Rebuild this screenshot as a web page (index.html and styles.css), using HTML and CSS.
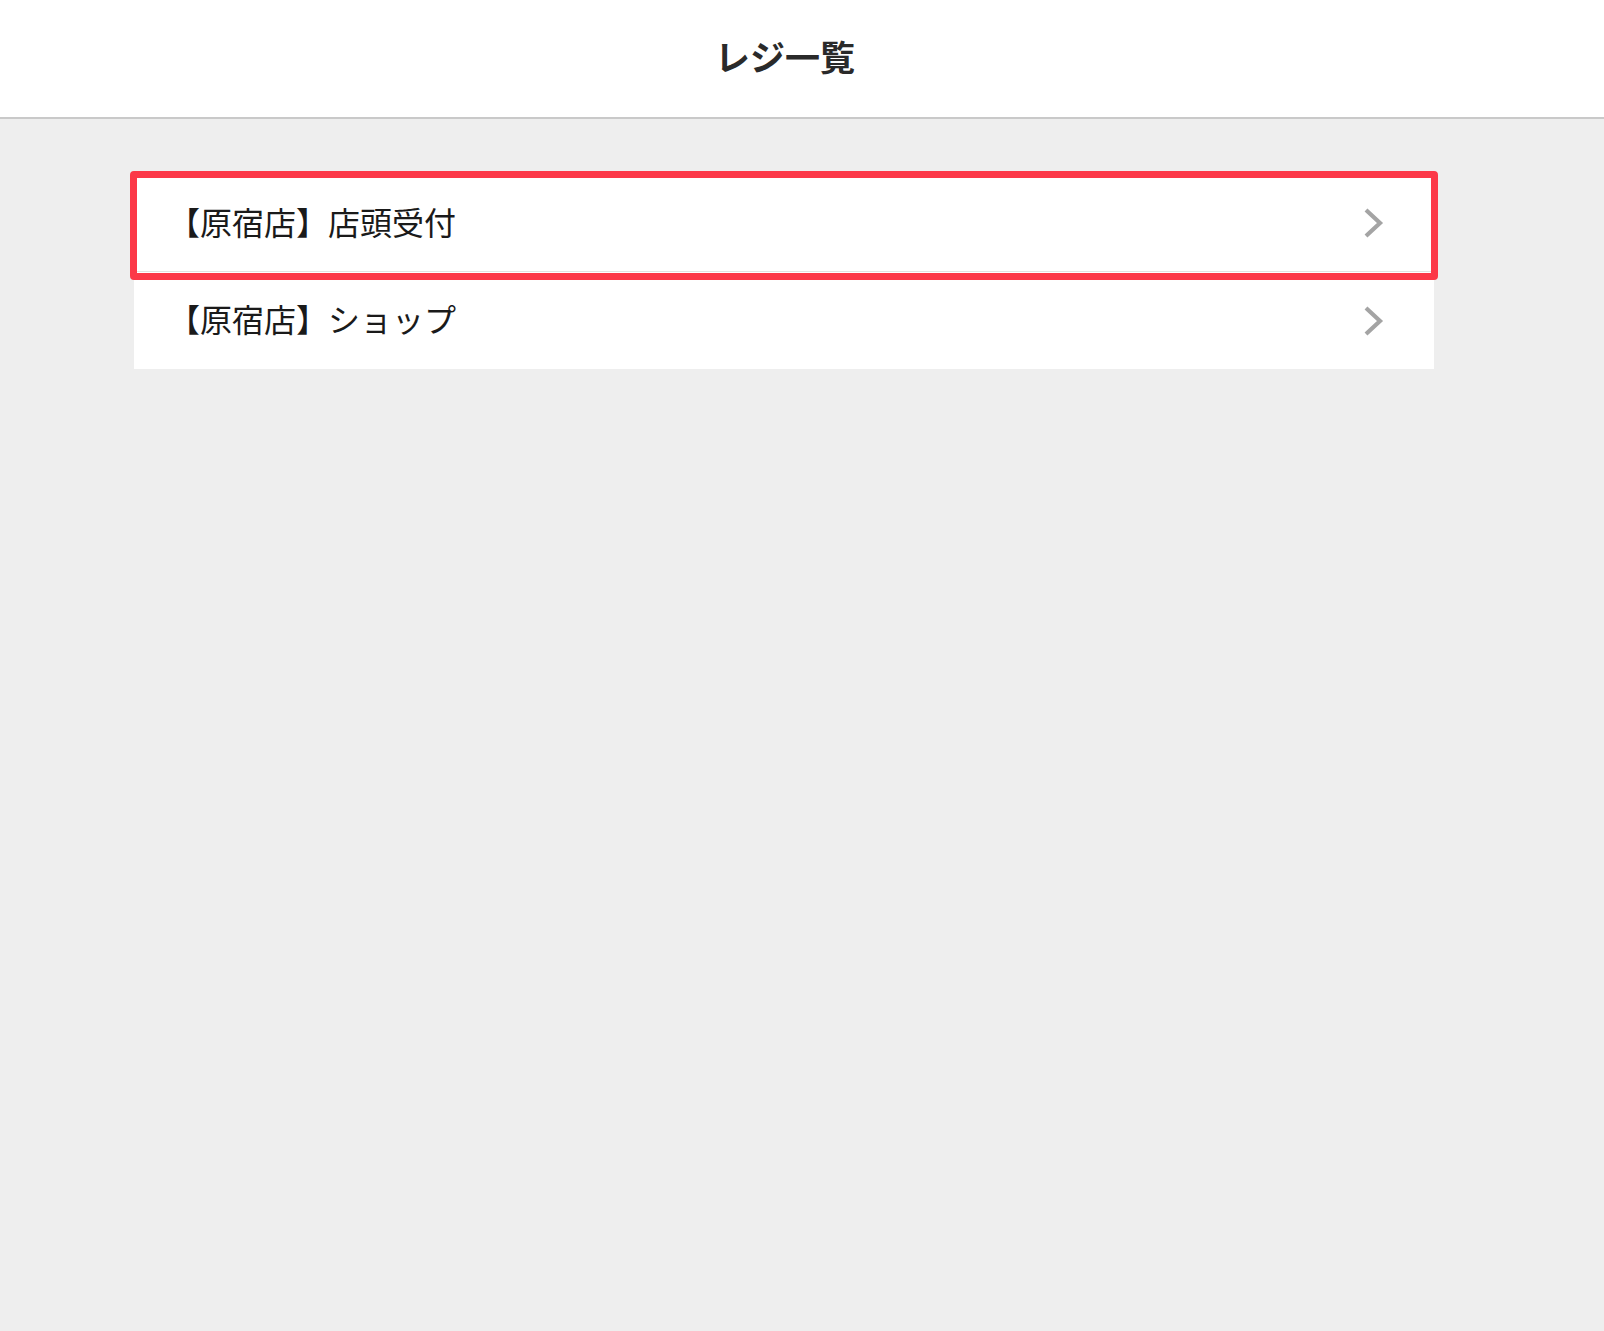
FILE: index.html
```html
<!DOCTYPE html>
<html lang="ja">
<head>
<meta charset="utf-8">
<title>レジ一覧</title>
<link rel="stylesheet" href="styles.css">
</head>
<body>
<header class="header">
  <h1 class="title">レジ一覧</h1>
</header>
<main class="content">
  <ul class="list">
    <li class="item item-selected">
      <span class="label">【原宿店】店頭受付</span>
      <svg class="chev" width="22" height="32" viewBox="0 0 22 32"><polyline points="4,3 18,16 4,29" fill="none" stroke="#a4a4a4" stroke-width="4.2"/></svg>
      <span class="highlight"></span>
    </li>
    <li class="item">
      <span class="label">【原宿店】ショップ</span>
      <svg class="chev" width="22" height="32" viewBox="0 0 22 32"><polyline points="4,3 18,16 4,29" fill="none" stroke="#a4a4a4" stroke-width="4.2"/></svg>
    </li>
  </ul>
</main>
</body>
</html>
```
FILE: styles.css
```css
html, body {
  margin: 0;
  padding: 0;
}
body {
  background: #eeeeee;
  font-family: "Noto Sans CJK JP", "Noto Sans", sans-serif;
  min-height: 1331px;
}
.header {
  height: 119px;
  background: #ffffff;
  border-bottom: 2px solid #c9c9c9;
  display: flex;
  align-items: center;
  justify-content: center;
  padding-right: 34px;
  box-sizing: border-box;
}
.title {
  margin: 0 0 6px 0;
  font-size: 35px;
  font-weight: 700;
  color: #2a2a2a;
  line-height: 1;
}
.content {
  padding: 56px 170px 0 134px;
}
.list {
  list-style: none;
  margin: 0;
  padding: 0;
  width: 1300px;
}
.item {
  position: relative;
  height: 97px;
  box-sizing: border-box;
  background: #ffffff;
  display: flex;
  align-items: center;
  justify-content: space-between;
  padding: 0 50px 0 34px;
}
.item-selected {
  border-bottom: 1px solid #e2e2e2;
  z-index: 1;
}
.label {
  font-size: 32px;
  color: #1a1a1a;
  line-height: 1;
  margin-top: -5px;
}
.chev {
  display: block;
}
.highlight {
  position: absolute;
  left: -4px;
  right: -4px;
  top: -4px;
  bottom: -9px;
  border: 7px solid #fc3848;
  border-radius: 4px;
  pointer-events: none;
  z-index: 2;
}
```
